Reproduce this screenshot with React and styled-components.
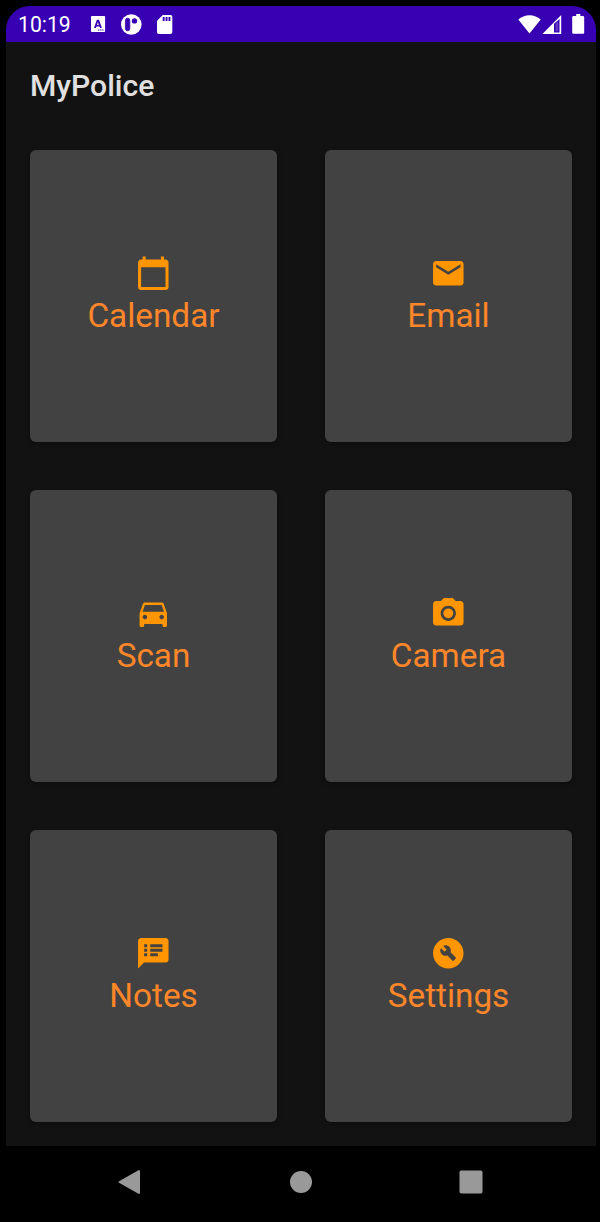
import React from 'react';
import styled, { createGlobalStyle } from 'styled-components';
import {
  MdCalendarToday,
  MdEmail,
  MdDirectionsCar,
  MdCameraAlt,
  MdSpeakerNotes,
  MdBuildCircle,
} from 'react-icons/md';

const GlobalStyle = createGlobalStyle`
  * { box-sizing: border-box; }
  body { margin: 0; background: #000; font-family: Roboto, sans-serif; }
`;

const Device = styled.div`
  width: 600px;
  height: 1222px;
  padding: 6px 4px 0 6px;
  background: #000;
  display: flex;
  flex-direction: column;
  overflow: hidden;
`;

const Screen = styled.div`
  flex: 1;
  display: flex;
  flex-direction: column;
  background: #121212;
  border-radius: 24px 24px 0 0;
  overflow: hidden;
`;

const StatusBar = styled.header`
  height: 36px;
  flex: none;
  display: flex;
  align-items: center;
  justify-content: space-between;
  padding: 0 11px 0 12px;
  background: #3700b3;
  color: #fff;
`;

const StatusGroup = styled.div`
  display: flex;
  align-items: center;
`;

const Clock = styled.span`
  width: 72px;
  font-size: 21.2px;
  line-height: 36px;
  padding-top: 1px;
`;

const Glyph = styled.svg`
  display: block;
  flex: none;
  margin-left: ${(p) => p.$gap || 0}px;
`;

const TitleBar = styled.div`
  height: 84px;
  flex: none;
  display: flex;
  align-items: center;
  padding: 4px 24px 0;
`;

const Title = styled.h1`
  margin: 0;
  font-size: 30.1px;
  font-weight: 500;
  line-height: 36px;
  color: #e0e0e0;
`;

const Grid = styled.main`
  flex: 1;
  display: grid;
  grid-template-columns: 247px 247px;
  grid-auto-rows: 292px;
  gap: 48px;
  padding: 24px;
`;

const Card = styled.section`
  display: flex;
  flex-direction: column;
  align-items: center;
  justify-content: center;
  border-radius: 6px;
  background: #424242;
  color: #ff9500;
  box-shadow: 0 2px 5px rgba(0, 0, 0, 0.3);

  svg {
    display: block;
    flex: none;
  }
`;

const Label = styled.span`
  padding: 4.5px 0 1px;
  font-size: 33.3px;
  line-height: 39.5px;
  color: #ff8629;
`;

const NavBar = styled.nav`
  height: 76px;
  flex: none;
  display: flex;
  justify-content: center;
  align-items: center;
  gap: 146px;
  padding: 0 2px 4px 0;
  background: #000;
`;

const tiles = [
  { label: 'Calendar', Icon: MdCalendarToday },
  { label: 'Email', Icon: MdEmail },
  { label: 'Scan', Icon: MdDirectionsCar },
  { label: 'Camera', Icon: MdCameraAlt },
  { label: 'Notes', Icon: MdSpeakerNotes },
  { label: 'Settings', Icon: MdBuildCircle },
];

export default function App() {
  return (
    <>
      <GlobalStyle />
      <Device>
        <Screen>
          <StatusBar>
            <StatusGroup>
              <Clock>10:19</Clock>
              <Glyph $gap={1} width="15" height="16" viewBox="0 0 15 16">
                <path
                  fill="#fff"
                  fillRule="evenodd"
                  d="M.8 0h12.5a.8.8 0 0 1 .8.8v14.4a.8.8 0 0 1-.8.8H.8a.8.8 0 0 1-.8-.8V.8A.8.8 0 0 1 .8 0zM5.900 3.700 3 12h1.900l.5-1.600h3.100l.5 1.600h1.900L8 3.700zm1 2.300.9 2.900H6z"
                />
                <path stroke="#3700b3" strokeWidth="1" strokeDasharray="1.4 .7" d="M7 14h6.400" />
              </Glyph>
              <Glyph $gap={15} width="21" height="21" viewBox="0 0 21 21">
                <circle cx="10.3" cy="10.5" r="10.3" fill="#fff" />
                <rect x="4.400" y="4.200" width="4.400" height="12.600" rx="2.200" fill="#3700b3" stroke="#3700b3" strokeWidth=".8" />
                <circle cx="13.500" cy="6.900" r="2.700" fill="#3700b3" />
              </Glyph>
              <Glyph $gap={15} width="16" height="19" viewBox="0 0 16 19">
                <path
                  fill="#fff"
                  fillRule="evenodd"
                  d="M5.800 0h7.700a1.800 1.800 0 0 1 1.800 1.800v15.400a1.800 1.800 0 0 1-1.800 1.800H1.800A1.800 1.800 0 0 1 0 17.200V5.800zM5.700 2v4h1.900V2zm2.900 0v4h1.900V2zm2.900 0v4h1.900V2z"
                />
              </Glyph>
            </StatusGroup>
            <StatusGroup>
              <Glyph width="23" height="19" viewBox="0 0 23 19">
                <path fill="#fff" d="M11.500 18.600.3 4.600C3.300 2 7.200.3 11.500.3s8.200 1.700 11.200 4.300z" />
              </Glyph>
              <Glyph $gap={1} width="20" height="19" viewBox="0 0 20 19">
                <path fill="#fff" fillRule="evenodd" d="M19.200 0v19H.4zM12 8.700v8.700h5.500V4z" />
                <path fill="#fff" d="M13.500 8.500 16.200 6v10.200h-2.700z" opacity=".22" />
              </Glyph>
              <Glyph $gap={10} width="13" height="20" viewBox="0 0 13 20">
                <path
                  fill="#fff"
                  d="M4.200 0h4.200v1.900h2.500c.7 0 1.300.6 1.300 1.300v15.300c0 .7-.6 1.300-1.300 1.300H1.500c-.7 0-1.300-.6-1.300-1.300V3.200c0-.7.6-1.300 1.300-1.300h2.700z"
                />
              </Glyph>
            </StatusGroup>
          </StatusBar>
          <TitleBar>
            <Title>MyPolice</Title>
          </TitleBar>
          <Grid>
            {tiles.map(({ label, Icon }) => (
              <Card key={label}>
                <Icon size={36.6} />
                <Label>{label}</Label>
              </Card>
            ))}
          </Grid>
        </Screen>
        <NavBar>
          <Glyph width="26" height="26" viewBox="0 0 26 26">
            <path
              fill="#999"
              stroke="#999"
              strokeWidth="2"
              strokeLinejoin="round"
              d="M22 2v22L2.500 13z"
            />
          </Glyph>
          <Glyph width="24" height="24" viewBox="0 0 24 24">
            <circle cx="12" cy="12" r="11" fill="#999" />
          </Glyph>
          <Glyph width="24" height="24" viewBox="0 0 24 24">
            <rect x=".5" y=".5" width="23" height="23" rx="1.700" fill="#999" />
          </Glyph>
        </NavBar>
      </Device>
    </>
  );
}
